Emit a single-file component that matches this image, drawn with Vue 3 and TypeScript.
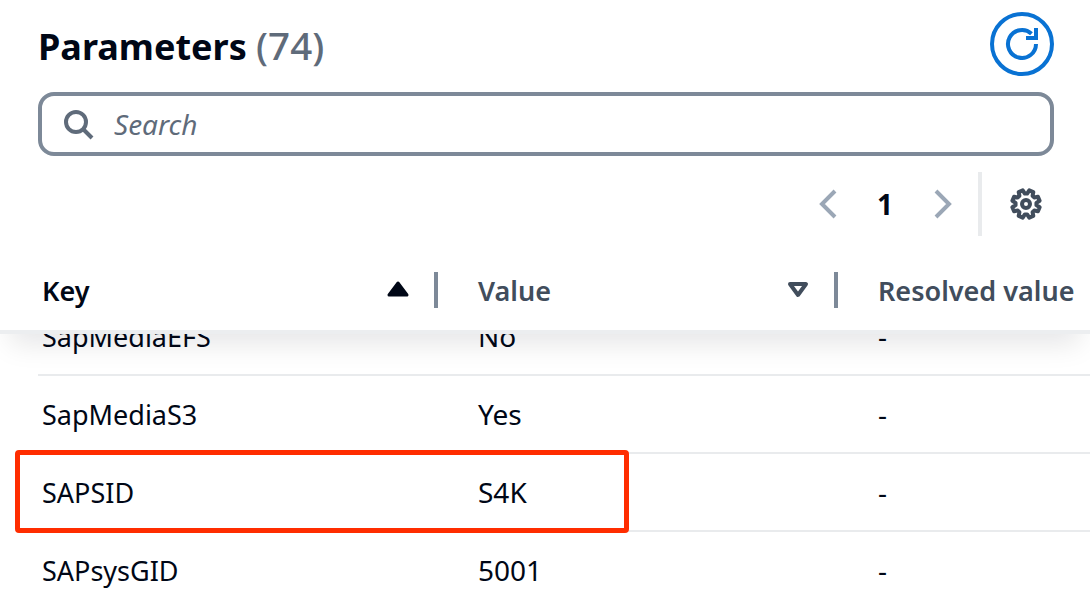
<template>
  <div class="page">
    <div class="title-row">
      <h1 class="title">Parameters <span class="count">(74)</span></h1>
      <button class="refresh">
        <svg width="64" height="64" viewBox="0 0 64 64" fill="none" stroke="#0972d3" stroke-width="4">
          <circle cx="32" cy="32" r="30" />
          <path d="M46 32A14 14 0 1 1 41.5 21.7" />
          <path d="M46 16V26H36" />
        </svg>
      </button>
    </div>

    <div class="search">
      <svg width="32" height="32" viewBox="0 0 32 32" fill="none" stroke="#5f6b7a" stroke-width="4">
        <circle cx="14" cy="14" r="10" />
        <path d="M21 21L30 30" />
      </svg>
      <span class="search-text">Search</span>
    </div>

    <div class="tools">
      <svg class="chev" width="32" height="32" viewBox="0 0 32 32" fill="none" stroke="#9ba7b6" stroke-width="4">
        <path d="M24 3L11 16L24 29" />
      </svg>
      <span class="page-no">1</span>
      <svg class="chev" width="32" height="32" viewBox="0 0 32 32" fill="none" stroke="#9ba7b6" stroke-width="4">
        <path d="M11 3L24 16L11 29" />
      </svg>
      <span class="tools-divider"></span>
      <svg class="gear" width="32" height="32" viewBox="0 0 32 32" fill="none" stroke="#414d5c" stroke-width="4" stroke-linejoin="round">
        <path :d="gearPath" />
        <circle cx="16" cy="16" r="4" />
      </svg>
    </div>

    <div class="table">
      <div class="head">
        <div v-for="(col, idx) in columns" :key="col.label" class="th" :class="{ active: col.sort === 'asc' }">
          <span>{{ col.label }}</span>
          <svg v-if="col.sort === 'asc'" class="caret" width="24" height="20" viewBox="0 0 24 20">
            <path d="M12 3L21 15H3Z" fill="#000716" stroke="#000716" stroke-width="3" stroke-linejoin="round" />
          </svg>
          <svg v-if="col.sort === 'desc'" class="caret" width="24" height="20" viewBox="0 0 24 20">
            <path d="M12 15L20 4H4Z" fill="none" stroke="#414d5c" stroke-width="4" stroke-linejoin="round" />
          </svg>
          <i v-if="idx < 2" class="th-divider"></i>
        </div>
      </div>
      <div class="body">
        <div v-for="row in rows" :key="row.key" class="row">
          <div class="cell">{{ row.key }}</div>
          <div class="cell">{{ row.value }}</div>
          <div class="cell">-</div>
        </div>
      </div>
      <div class="callout"></div>
    </div>
  </div>
</template>

<script setup lang="ts">
const columns = [
  { label: "Key", sort: "asc" },
  { label: "Value", sort: "desc" },
  { label: "Resolved value", sort: "" },
];

const rows = [
  { key: "SapMediaEFS", value: "No" },
  { key: "SapMediaS3", value: "Yes" },
  { key: "SAPSID", value: "S4K" },
  { key: "SAPsysGID", value: "5001" },
];

// 8 tooth gear outline
function buildGear(teeth: number, outer: number, inner: number) {
  const pts: string[] = [];
  const step = (Math.PI * 2) / teeth;
  for (let i = 0; i < teeth; i++) {
    const a = i * step + step / 2;
    const add = (r: number, d: number) => {
      pts.push((16 + r * Math.cos(a + d)).toFixed(2) + " " + (16 + r * Math.sin(a + d)).toFixed(2));
    };
    add(inner, -step * 0.36);
    add(outer, -step * 0.2);
    add(outer, step * 0.2);
    add(inner, step * 0.36);
  }
  return "M" + pts.join("L") + "Z";
}
const gearPath = buildGear(8, 14, 10.5);
</script>

<style>
html,
body {
  overflow: hidden;
  background: #fff;
}
</style>

<style scoped>
.page {
  width: 1090px;
  height: 596px;
  overflow: hidden;
  box-sizing: border-box;
  padding: 12px 36px 0 38px;
  font-family: "Noto Sans", Arial, sans-serif;
  color: #000716;
}
.title-row {
  display: flex;
  align-items: center;
  justify-content: space-between;
  height: 64px;
}
.title {
  margin: 0;
  padding-top: 3px;
  font-size: 36px;
  font-weight: 700;
  line-height: 44px;
}
.count {
  font-weight: 500;
  font-size: 38.5px;
  color: #5f6b7a;
}
.refresh {
  width: 64px;
  height: 64px;
  padding: 0;
  border: 0;
  background: none;
  display: flex;
}
.search {
  margin-top: 16px;
  height: 64px;
  box-sizing: border-box;
  border: 4px solid #7d8998;
  border-radius: 16px;
  display: flex;
  align-items: center;
  padding-left: 20px;
  gap: 20px;
}
.search-text {
  font-size: 28px;
  font-style: italic;
  color: #5f6b7a;
}
.tools {
  margin-top: 16px;
  height: 64px;
  display: flex;
  align-items: center;
  justify-content: flex-end;
}
.page-no {
  width: 80px;
  padding-left: 2px;
  text-align: center;
  font-size: 28px;
  font-weight: 700;
}
.tools-divider {
  width: 4px;
  height: 64px;
  background: #e9ebed;
  margin: 0 28px 0 21px;
}
.gear {
  margin-right: 12px;
}
.table {
  position: relative;
  margin: 28px -36px 0 -38px;
}
.head {
  position: relative;
  z-index: 2;
  height: 70px;
  box-sizing: border-box;
  padding-left: 38px;
  background: #fff;
  border-bottom: 4px solid #eceef0;
  display: grid;
  grid-template-columns: 400px 400px 1fr;
  box-shadow: 0 20px 28px -10px rgba(0, 7, 22, 0.1);
  clip-path: inset(0 0 -60px 0);
}
.th {
  position: relative;
  display: flex;
  align-items: center;
  justify-content: space-between;
  padding: 0 28px 14px 40px;
  font-size: 27px;
  font-weight: 600;
  color: #414d5c;
  white-space: nowrap;
}
.th.active {
  padding-left: 4px;
  color: #000716;
}
.th-divider {
  position: absolute;
  right: 0;
  top: 8px;
  width: 4px;
  height: 36px;
  background: #7d8998;
}
.body {
  margin: -36px 0 0 38px;
}
.row {
  display: grid;
  grid-template-columns: 400px 400px 1fr;
  height: 78px;
  box-sizing: border-box;
  border-bottom: 2px solid #e9ebed;
  align-items: center;
}
.cell {
  padding-left: 40px;
  font-size: 28px;
  line-height: 36px;
  white-space: nowrap;
}
.cell:first-child {
  padding: 2px 0 0 4px;
  font-size: 27px;
}
/* red annotation over the SAPSID row */
.callout {
  position: absolute;
  left: 15px;
  top: 186px;
  width: 614px;
  height: 83px;
  box-sizing: border-box;
  border: 5px solid #ff2d00;
  border-radius: 4px;
}
</style>
